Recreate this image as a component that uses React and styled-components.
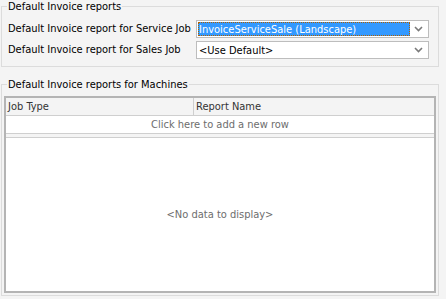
import React from "react";
import styled, { createGlobalStyle } from "styled-components";

const GlobalStyle = createGlobalStyle`
  html, body {
    margin: 0;
    padding: 0;
    background: #f4f4f4;
  }
  body {
    font-family: "DejaVu Sans Condensed", "Liberation Sans", sans-serif;
    font-size: 11px;
    color: #000;
  }
`;

const invoiceFields = [
  { label: "Default Invoice report for Service Job", value: "InvoiceServiceSale (Landscape)", focused: true },
  { label: "Default Invoice report for Sales Job", value: "<Use Default>", focused: false },
];

const ChevronIcon = () => (
  <svg width="9" height="6" viewBox="0 0 9 6">
    <path d="M1 1 L4.5 4.5 L8 1" fill="none" stroke="#7a7a7a" strokeWidth="1.6" />
  </svg>
);

const App = () => (
  <Page>
    <GlobalStyle />
    <Group>
      <Legend>Default Invoice reports</Legend>
      <FieldList>
        {invoiceFields.map(field => (
          <FieldRow key={field.label}>
            <Label>{field.label}</Label>
            <Combo>
              <ComboText focused={field.focused}>{field.value}</ComboText>
              <ComboArrow>
                <ChevronIcon />
              </ComboArrow>
            </Combo>
          </FieldRow>
        ))}
      </FieldList>
    </Group>
    <Group>
      <Legend>Default Invoice reports for Machines</Legend>
      <Grid>
        <HeaderRow>
          <HeaderCell width={188}>Job Type</HeaderCell>
          <HeaderCell>Report Name</HeaderCell>
        </HeaderRow>
        <NewRow>Click here to add a new row</NewRow>
        <Separator />
        <DataArea>&lt;No data to display&gt;</DataArea>
      </Grid>
    </Group>
  </Page>
);

export default App;

const Page = styled.div`
  display: flex;
  flex-direction: column;
  gap: 11px;
  width: 438px;
  padding: 0 0 0 1px;
`;

const Group = styled.fieldset`
  margin: 0;
  padding: 0 2px 2px 2px;
  border: 1px solid #dcdcdc;
  box-sizing: border-box;
`;

const Legend = styled.legend`
  padding: 0 1px;
  margin-left: 3px;
  font-size: 11px;
  line-height: 13px;
  color: #000;
`;

const FieldList = styled.div`
  display: flex;
  flex-direction: column;
  gap: 3px;
  padding: 7px 7px 5px 4px;
`;

const FieldRow = styled.div`
  display: flex;
  align-items: center;
  justify-content: space-between;
`;

const Label = styled.div`
  font-size: 11px;
  color: #000;
  padding-bottom: 2px;
`;

const Combo = styled.div`
  width: 233px;
  height: 18px;
  box-sizing: border-box;
  border: 1px solid #bdbdbd;
  background: #fff;
  display: flex;
  align-items: center;
  padding: 1px;
`;

const ComboText = styled.div`
  flex: 0 0 212px;
  height: 100%;
  box-sizing: border-box;
  padding-left: 1px;
  display: flex;
  align-items: center;
  white-space: nowrap;
  overflow: hidden;
  color: ${props => (props.focused ? "#fff" : "#000")};
  background: ${props => (props.focused ? "#3399ff" : "transparent")};
  outline: ${props => (props.focused ? "1px dotted #b06000" : "none")};
  outline-offset: -1px;
`;

const ComboArrow = styled.div`
  flex: 1;
  display: flex;
  align-items: center;
  justify-content: center;
`;

const Grid = styled.div`
  height: 197px;
  box-sizing: border-box;
  margin-top: 5px;
  border: 2px solid #b4b4b4;
  background: #fff;
  display: flex;
  flex-direction: column;
`;

const HeaderRow = styled.div`
  display: flex;
  height: 17px;
  background: #f4f4f4;
  border-bottom: 1px solid #cfcfcf;
`;

const HeaderCell = styled.div`
  flex: ${props => (props.width ? `0 0 ${props.width}px` : "1")};
  box-sizing: border-box;
  padding-left: 2px;
  display: flex;
  align-items: center;
  color: #333;
  border-right: ${props => (props.width ? "1px solid #cfcfcf" : "none")};
`;

const NewRow = styled.div`
  height: 17px;
  display: flex;
  align-items: center;
  justify-content: center;
  color: #6d6d6d;
  border-bottom: 1px solid #cfcfcf;
`;

const Separator = styled.div`
  height: 3px;
  background: #f4f4f4;
  border-bottom: 1px solid #cfcfcf;
`;

const DataArea = styled.div`
  flex: 1;
  display: flex;
  align-items: center;
  justify-content: center;
  color: #6d6d6d;
`;
